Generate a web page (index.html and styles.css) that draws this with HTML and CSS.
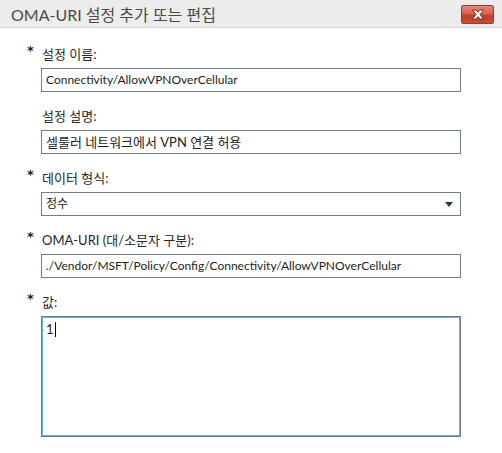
FILE: index.html
```html
<!DOCTYPE html>
<html lang="ko">
<head>
<meta charset="utf-8">
<title>OMA-URI 설정 추가 또는 편집</title>
<link rel="stylesheet" href="styles.css">
</head>
<body>
<div class="dialog">
  <div class="titlebar">
    <span class="title">OMA-URI 설정 추가 또는 편집</span>
    <button class="close" aria-label="닫기">
      <svg width="14" height="11" viewBox="0 0 14 11">
        <path d="M1.5 1 L5 1 L7 3.3 L9 1 L12.5 1 L9 5.5 L12.5 10 L9 10 L7 7.7 L5 10 L1.5 10 L5 5.5 Z" fill="#ffffff" stroke="#6e2318" stroke-width="0.9" stroke-linejoin="round"/>
      </svg>
    </button>
  </div>
  <div class="form">
    <div class="field">
      <span class="req">*</span>
      <label class="label">설정 이름:</label>
      <div class="input">Connectivity/AllowVPNOverCellular</div>
    </div>
    <div class="field">
      <span class="req"></span>
      <label class="label">설정 설명:</label>
      <div class="input ko">셀룰러 네트워크에서 VPN 연결 허용</div>
    </div>
    <div class="field">
      <span class="req">*</span>
      <label class="label">데이터 형식:</label>
      <div class="input select"><span>정수</span><span class="arrow"></span></div>
    </div>
    <div class="field">
      <span class="req">*</span>
      <label class="label">OMA-URI (대/소문자 구분):</label>
      <div class="input">./Vendor/MSFT/Policy/Config/Connectivity/AllowVPNOverCellular</div>
    </div>
    <div class="field">
      <span class="req">*</span>
      <label class="label">값:</label>
      <div class="input textarea">1<span class="caret"></span></div>
    </div>
  </div>
</div>
</body>
</html>
```
FILE: styles.css
```css
html, body {
  margin: 0;
  padding: 0;
  background: #ffffff;
}
body {
  font-family: "Lato", "Noto Sans CJK KR", sans-serif;
  font-size: 13px;
  color: #222;
}
.dialog {
  width: 502px;
  height: 453px;
  box-sizing: border-box;
}
.titlebar {
  height: 27px;
  background: #ececec;
  border-bottom: 1px solid #d8d8d8;
  border-top: 1px solid #e2e2e2;
  box-sizing: content-box;
  display: flex;
  align-items: center;
  justify-content: space-between;
  padding: 0 8px 0 11px;
  margin-top: -1px;
}
.title {
  font-size: 16px;
  color: #4a4a4a;
  font-family: "Lato", "Noto Sans CJK KR", sans-serif;
}
.close {
  width: 33px;
  height: 19px;
  padding: 0;
  border: 1px solid #9e3a2c;
  border-radius: 2px;
  background: linear-gradient(#e3877a 0%, #d5604d 45%, #c23f2a 55%, #c94a35 100%);
  display: flex;
  align-items: center;
  justify-content: center;
  margin-top: 1px;
}
.form {
  padding: 16px 41px 0 27px;
  display: flex;
  flex-direction: column;
  gap: 14px;
}
.field {
  display: grid;
  grid-template-columns: 14px 420px;
  grid-template-rows: 20px 24px;
  row-gap: 4px;
}
.req {
  grid-column: 1;
  grid-row: 1;
  font-weight: bold;
  font-size: 13px;
  line-height: 14px;
  color: #1a1a1a;
  font-family: "DejaVu Sans", sans-serif;
}
.label {
  grid-column: 2;
  grid-row: 1;
  line-height: 20px;
  padding-left: 1px;
  color: #262626;
}
.input {
  grid-column: 2;
  grid-row: 2;
  box-sizing: border-box;
  height: 24px;
  border: 1px solid #6f808c;
  padding: 0 4px;
  line-height: 22px;
  white-space: nowrap;
  overflow: hidden;
  color: #1e1e1e;
  font-size: 12px;
}
.ko {
  font-size: 13px;
}
.select {
  display: flex;
  justify-content: space-between;
  align-items: center;
  padding-right: 7px;
}
.arrow {
  width: 0;
  height: 0;
  border-left: 4px solid transparent;
  border-right: 4px solid transparent;
  border-top: 5px solid #333;
}
.field:last-child {
  grid-template-rows: 20px 121px;
}
.textarea {
  height: 121px;
  border-color: #6a7c88;
  box-shadow: inset 0 0 0 1px #62b5d4;
  padding-top: 1px;
  font-size: 13px;
}
.caret {
  display: inline-block;
  width: 1px;
  height: 15px;
  background: #000;
  vertical-align: -3px;
  margin-left: 1px;
}
```
